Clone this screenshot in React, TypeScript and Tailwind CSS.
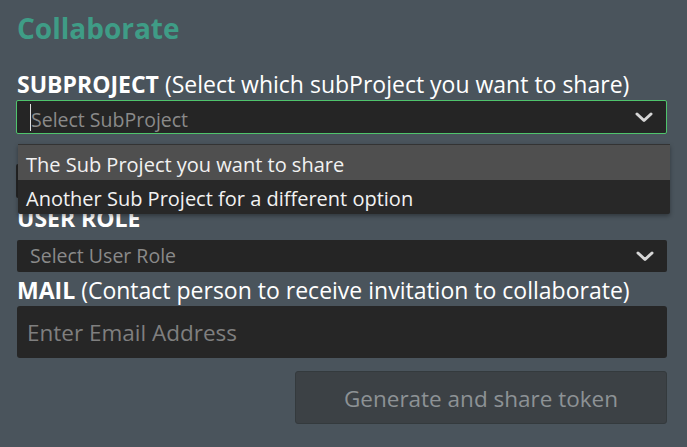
import React from "react";

const Chevron = () => (
  <svg width="18" height="11" viewBox="0 0 18 11" className="shrink-0">
    <polyline points="2,2 9,8.5 16,2" fill="none" stroke="#d6d6d6" strokeWidth="3" strokeLinecap="round" strokeLinejoin="round" />
  </svg>
);

export default function App() {
  return (
    <div
      className="w-[687px] h-[447px] bg-[#4a545c] overflow-hidden pl-[16px] pr-[20px] pt-[9px]"
      style={{ fontFamily: "'Open Sans', sans-serif" }}
    >
      <h1 className="text-[28px] font-bold leading-[38px] text-[#3f9c86] pl-[1px]">Collaborate</h1>

      <div className="mt-[23px] text-white text-[23px] leading-[28px] pl-[1px] whitespace-nowrap">
        <span className="font-bold">SUBPROJECT</span> (Select which subProject you want to share)
      </div>
      <div className="relative mt-[2px]">
        <div className="h-[34px] bg-[#252525] border border-[#4fc46c] rounded-[2px] flex items-center pl-[13px] pr-[13px]">
          <div className="w-[1px] h-[27px] bg-[#e0e0e0]" />
          <span className="flex-1 text-[19.5px] text-[#8a8a8a] pt-[5px]">Select SubProject</span>
          <Chevron />
        </div>

        <div className="mt-[2px] h-[28px]" />
        <div className="h-[34px] bg-[#252525] rounded-[2px]" />

        <div className="absolute left-[2px] top-[44px] w-[652px] bg-[#282828] border-t border-[#333] rounded-b-[2px] shadow-[0_2px_4px_rgba(0,0,0,0.35)] text-[20px] text-[#f2f2f2] z-10">
          <div className="h-[35px] bg-[#4f4f4f] flex items-center pl-[8px] pt-[4px]">The Sub Project you want to share</div>
          <div className="h-[34px] flex items-center pl-[8px] pt-[3px]">Another Sub Project for a different option</div>
        </div>
      </div>

      <div className="mt-[6px] text-white text-[23px] leading-[28px] pl-[1px]">
        <span className="font-bold">USER ROLE</span>
      </div>
      <div className="mt-[8px] h-[32px] bg-[#252525] rounded-[2px] flex items-center pl-[13px] pr-[13px] ml-[1px]">
        <span className="flex-1 text-[19.5px] text-[#8a8a8a]">Select User Role</span>
        <Chevron />
      </div>

      <div className="mt-[4px] text-white text-[23px] leading-[28px] pl-[1px] whitespace-nowrap">
        <span className="font-bold">MAIL</span> (Contact person to receive invitation to collaborate)
      </div>
      <div className="mt-[2px] h-[52px] bg-[#262626] rounded-[3px] flex items-center pl-[10px] ml-[1px] pt-[2px]">
        <span className="text-[22.5px] text-[#7f7f7f]">Enter Email Address</span>
      </div>

      <div className="flex justify-end mt-[13px]">
        <div className="w-[372px] h-[53px] bg-[#3c4145] border border-[#343a3d] rounded-[3px] flex items-center justify-center pt-[3px] text-[22.5px] text-[#8d9295]">
          Generate and share token
        </div>
      </div>
    </div>
  );
}
